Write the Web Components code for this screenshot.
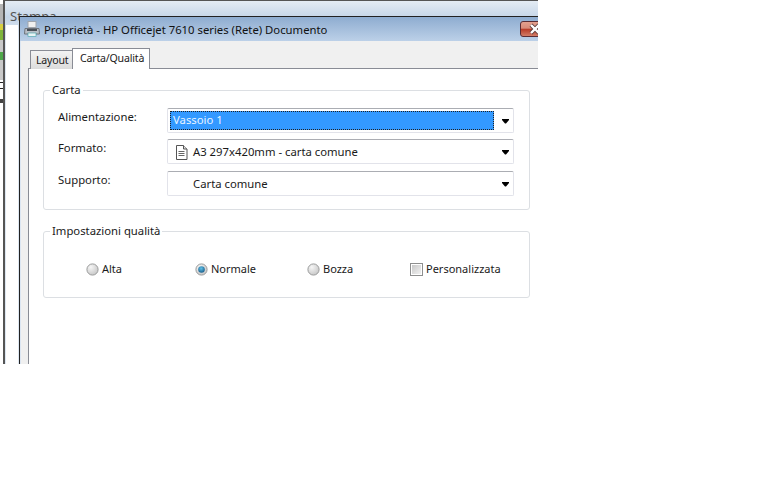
<!DOCTYPE html>
<html lang="it">
<head>
<meta charset="utf-8">
<title>Proprietà</title>
<style>
    html, body { margin: 0; background: #fff; }
    body { font: 11.3px "Noto Sans", "Liberation Sans", sans-serif; color: #1a1a1a; }
</style>
</head>
<body>
<print-desktop>
    <print-dialog slot="dialog" heading="Proprietà - HP Officejet 7610 series (Rete) Documento">
        <paper-tabs slot="tabs"></paper-tabs>
        <group-box label="Carta">
            <div style="display:grid;grid-template-columns:109px 347px;grid-template-rows:31px 32px 25px;padding-top:10px">
                <form-label>Alimentazione:</form-label>
                <combo-box selected>Vassoio 1</combo-box>
                <form-label>Formato:</form-label>
                <combo-box icon>A3 297x420mm - carta comune</combo-box>
                <form-label>Supporto:</form-label>
                <combo-box indent>Carta comune</combo-box>
            </div>
        </group-box>
        <group-box label="Impostazioni qualità" quality>
            <div style="display:grid;grid-template-columns:109px 112px 103px auto;padding:21px 0 0 28px">
                <option-mark kind="radio">Alta</option-mark>
                <option-mark kind="radio" checked>Normale</option-mark>
                <option-mark kind="radio">Bozza</option-mark>
                <option-mark kind="check">Personalizzata</option-mark>
            </div>
        </group-box>
    </print-dialog>
</print-desktop>

<script>
class PrintDesktop extends HTMLElement {
    constructor() {
        super();
        this.attachShadow({mode: 'open'}).innerHTML = this.template;
    }

    get template() {
        return `
            <style>
                :host { display: block; position: relative; width: 538px; height: 364px; overflow: hidden; background: #fff; }
                .behind {
                    position: absolute; left: 0; top: 0; width: 3px; height: 100%;
                    background: linear-gradient(#fff 0 4px, #b5b5b5 4px 24px, #d8d040 24px 30px, #7fb53c 30px 40px, #c9c9c9 40px 52px, #4fa84a 52px 60px, #c9c9c9 60px 80px, #fff 80px 82px, #222 82px 83px, #fff 83px 88px, #222 88px 89px, #fff 89px 99px, #444 99px 103px, #fff 103px);
                }
                .stampa {
                    position: absolute; left: 3px; top: 0; bottom: 0; right: 0; box-sizing: border-box;
                    border-left: 2px solid #555; border-top: 1px solid #555;
                    background: linear-gradient(#e4ecf4, #c6d6e8 16px, #dde7f2 40px);
                }
                .stampa span { position: absolute; left: 5px; top: 6px; color: #555; font-size: 13px; }
                .stampa i { position: absolute; left: 1px; top: 24px; bottom: 0; width: 12px; background: #fff; }
                ::slotted([slot="dialog"]) { position: absolute; left: 19px; top: 16px; }
            </style>
            <div class="behind"></div>
            <div class="stampa"><span>Stampa</span><i></i></div>
            <slot name="dialog"></slot>
        `;
    }
}

class PrintDialog extends HTMLElement {
    constructor() {
        super();
        this.attachShadow({mode: 'open'}).innerHTML = this.template;
        this.shadowRoot.querySelector('.heading').textContent = this.getAttribute('heading');
    }

    get template() {
        return `
            <style>
                :host { display: flex; flex-direction: column; width: 540px; height: 360px; box-sizing: border-box; border: 1px solid #222; border-width: 1px 0 0 1px; background: #dce6f2; }
                .bar { display: flex; align-items: center; height: 24px; padding-left: 4px; gap: 4px; background: linear-gradient(#8eacd0, #bcd0e8); position: relative; flex: none; }
                .heading { color: #111; white-space: nowrap; }
                .close {
                    position: absolute; left: 500px; top: 4px; width: 28px; height: 16px; box-sizing: border-box;
                    border: 1px solid #5a2c34; border-radius: 3px;
                    background: linear-gradient(#e3a08e, #d98a78 45%, #b83a26 50%, #d27d68);
                }
                .close svg { position: absolute; left: 7px; top: 1px; }
                .client { flex: 1; margin-left: 1px; padding: 7px 0 0 7px; background: #f0f0f0; display: flex; flex-direction: column; }
                .page { flex: 1; background: #fff; border-left: 1px solid #898c95; padding: 14px 0 0 14px; display: flex; flex-direction: column; gap: 13px; }
            </style>
            <div class="bar">
                <svg width="16" height="16" viewBox="0 0 16 16">
                    <rect x="4" y="0.5" width="8" height="6" fill="#f0f0f0" stroke="#a0a5ac"/>
                    <path d="M1 7.500 h14 l0.500 5.500 h-15z" fill="#b9bfc7" stroke="#6e747c"/>
                    <rect x="3" y="8" width="10" height="2" fill="#4a5058"/>
                    <rect x="4" y="12" width="8" height="3.500" fill="#e8f4f4" stroke="#3fa0a8" stroke-width="0.6"/>
                </svg>
                <span class="heading"></span>
                <div class="close">
                    <svg width="14" height="12" viewBox="0 0 14 12"><path d="M3 2 L11 10 M11 2 L3 10" stroke="#5a3a3a" stroke-width="4"/><path d="M3 2 L11 10 M11 2 L3 10" stroke="#fff" stroke-width="2.400"/></svg>
                </div>
            </div>
            <div class="client">
                <slot name="tabs"></slot>
                <div class="page"><slot></slot></div>
            </div>
        `;
    }
}

class PaperTabs extends HTMLElement {
    constructor() {
        super();
        this.attachShadow({mode: 'open'}).innerHTML = this.template;
    }

    get template() {
        return `
            <style>
                :host { display: flex; align-items: flex-end; height: 21px; margin-bottom: -1px; position: relative; box-shadow: inset 0 -1px 0 #898c95; font-size: 10.600px; letter-spacing: -0.2px; }
                .tab { box-sizing: border-box; border: 1px solid #898c95; border-bottom: 0; white-space: nowrap; }
                .back { height: 19px; margin-left: 2px; padding: 2px 5px 0; width: 42px; background: linear-gradient(#f3f3f3, #dcdcdc); border-right: 0; }
                .front { height: 21px; width: 78px; padding: 2px 6px 0 7px; background: #fff; }
            </style>
            <div class="tab back">Layout</div>
            <div class="tab front">Carta/Qualità</div>
        `;
    }
}

class GroupBox extends HTMLElement {
    constructor() {
        super();
        this.attachShadow({mode: 'open'}).innerHTML = this.template;
        this.shadowRoot.querySelector('legend').textContent = this.getAttribute('label');
    }

    get template() {
        return `
            <style>
                :host { display: block; width: 487px; }
                :host([quality]) fieldset { height: 75px; }
                fieldset { margin: 0; box-sizing: border-box; height: 128px; border: 1px solid #dcdfe3; border-radius: 3px; padding: 0 0 0 14px; }
                legend { padding: 0 2px; margin-left: -8px; height: 16px; line-height: 16px; }
            </style>
            <fieldset><legend></legend><slot></slot></fieldset>
        `;
    }
}

class FormLabel extends HTMLElement {
    constructor() {
        super();
        this.attachShadow({mode: 'open'}).innerHTML = `
            <style>:host { display: block; line-height: 18px; }</style>
            <slot></slot>
        `;
    }
}

class ComboBox extends HTMLElement {
    constructor() {
        super();
        this.attachShadow({mode: 'open'}).innerHTML = this.template;
    }

    get template() {
        return `
            <style>
                :host { display: flex; align-items: center; height: 25px; box-sizing: border-box; border: 1px solid #e2e3ea; border-top-color: #abadb3; border-radius: 2px; background: #fff; position: relative; padding-left: 25px; }
                :host([selected]) { padding: 2px 19px 2px 2px; }
                :host([selected]) .text { flex: 1; height: 19px; line-height: 18px; box-sizing: border-box; padding-left: 3px; background: #3399ff; color: #e8f4ff; outline: 1px dotted #222; outline-offset: -1px; }
                svg.page { display: none; position: absolute; left: 7px; top: 5px; }
                :host([icon]) svg.page { display: block; }
                svg.arrow { position: absolute; right: 4px; top: 10px; }
            </style>
            <svg class="page" width="13" height="15" viewBox="0 0 13 15">
                <path d="M1.500 .5 h7 l3.500 3.500 v10.500 h-10.500z" fill="#fff" stroke="#555"/>
                <path d="M8.500 .5 v3.500 h3.500" fill="#ddd" stroke="#555"/>
                <path d="M3.500 6.500 h6 M3.500 8.500 h6 M3.500 10.500 h6" stroke="#666"/>
            </svg>
            <span class="text"><slot></slot></span>
            <svg class="arrow" width="7" height="5" viewBox="0 0 7 5"><path d="M0 0 h7 v1 l-3 3.500 h-1 L0 1z" fill="#000"/></svg>
        `;
    }
}

class OptionMark extends HTMLElement {
    constructor() {
        super();
        this.attachShadow({mode: 'open'}).innerHTML = this.template;
    }

    get template() {
        const id = Math.random().toString(36).slice(2);
        const checked = this.hasAttribute('checked');
        const mark = this.getAttribute('kind') === 'check'
            ? `<svg width="13" height="13" viewBox="0 0 13 13">
                   <defs><linearGradient id="c${id}" x1="0" y1="0" x2="1" y2="1"><stop offset="0" stop-color="#c8c8c8"/><stop offset="1" stop-color="#f2f2f2"/></linearGradient></defs>
                   <rect x=".5" y=".5" width="12" height="12" fill="#fff" stroke="#8e8f8f"/>
                   <rect x="2" y="2" width="9" height="9" fill="url(#c${id})"/>
               </svg>`
            : `<svg width="13" height="13" viewBox="0 0 13 13">
                   <defs>
                       <radialGradient id="r${id}" cx=".35" cy=".3" r=".9"><stop offset="0" stop-color="#f6f6f6"/><stop offset="1" stop-color="#bdbdbd"/></radialGradient>
                       <radialGradient id="d${id}" cx=".45" cy=".35" r=".8"><stop offset="0" stop-color="#5fc0e8"/><stop offset="1" stop-color="#0c4a78"/></radialGradient>
                   </defs>
                   <circle cx="6.500" cy="6.500" r="5.600" fill="url(#r${id})" stroke="#9a9b9b"/>
                   ${checked ? `<circle cx="6.500" cy="6.500" r="3.300" fill="url(#d${id})"/>` : ''}
               </svg>`;
        return `
            <style>
                :host { display: flex; align-items: center; gap: 3px; line-height: 18px; white-space: nowrap; font-size: 11px; }
                svg { flex: none; }
            </style>
            ${mark}<slot></slot>
        `;
    }
}

customElements.define('print-desktop', PrintDesktop);
customElements.define('print-dialog', PrintDialog);
customElements.define('paper-tabs', PaperTabs);
customElements.define('group-box', GroupBox);
customElements.define('form-label', FormLabel);
customElements.define('combo-box', ComboBox);
customElements.define('option-mark', OptionMark);
</script>
</body>
</html>
